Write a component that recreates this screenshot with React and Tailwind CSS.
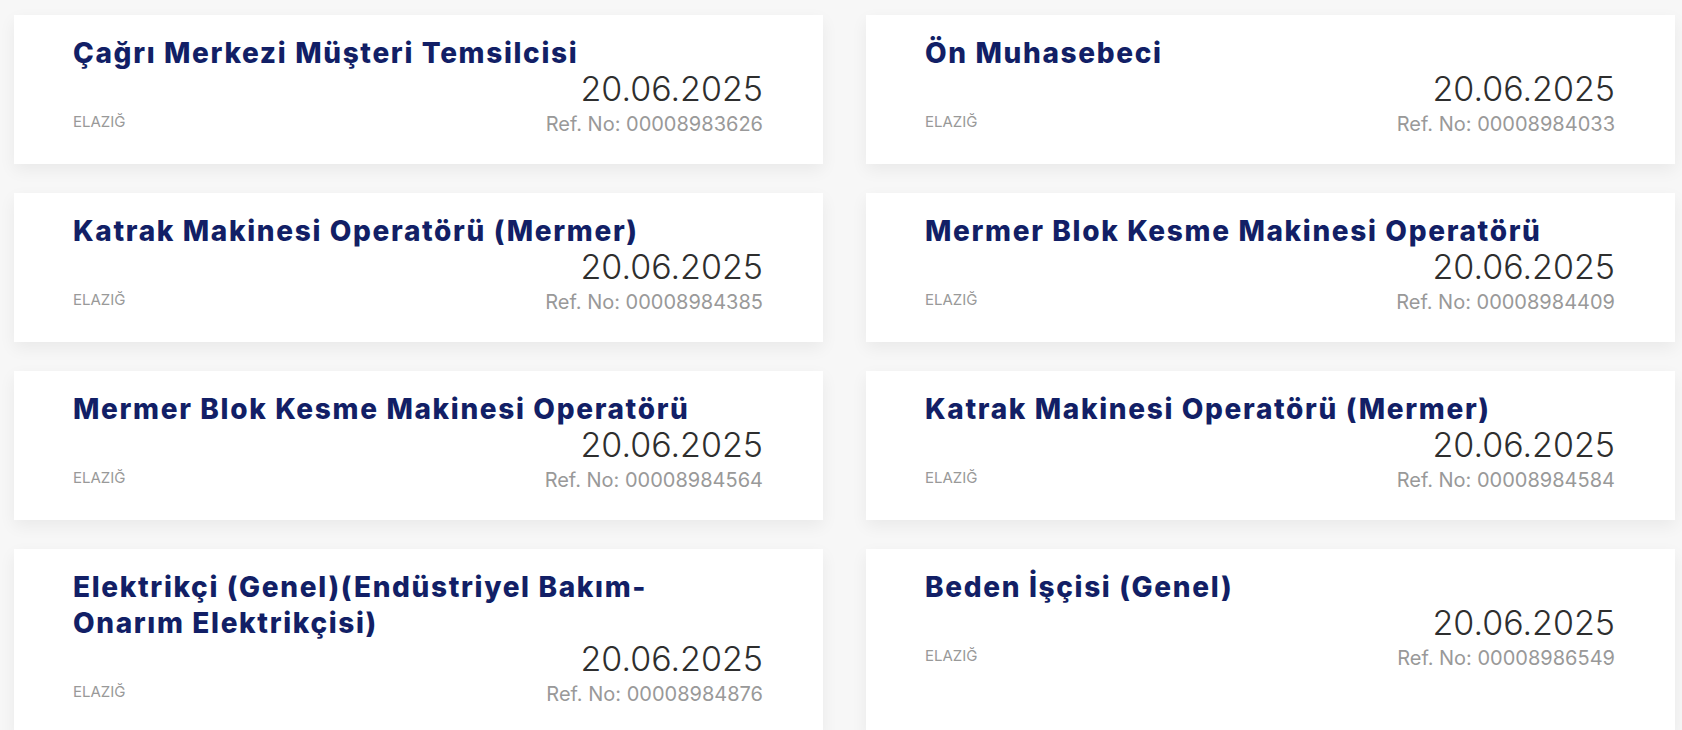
import React from "react";

const jobs = [
  { title: "Çağrı Merkezi Müşteri Temsilcisi", ref: "00008983626" },
  { title: "Ön Muhasebeci", ref: "00008984033" },
  { title: "Katrak Makinesi Operatörü (Mermer)", ref: "00008984385" },
  { title: "Mermer Blok Kesme Makinesi Operatörü", ref: "00008984409" },
  { title: "Mermer Blok Kesme Makinesi Operatörü", ref: "00008984564" },
  { title: "Katrak Makinesi Operatörü (Mermer)", ref: "00008984584" },
  { title: "Elektrikçi (Genel)(Endüstriyel Bakım-Onarım Elektrikçisi)", ref: "00008984876" },
  { title: "Beden İşçisi (Genel)", ref: "00008986549" },
];

function Card({ title, refNo }) {
  return (
    <div className="bg-white shadow-[0_6px_16px_rgba(0,0,0,0.06)] pl-[59px] pr-[60px] pt-[20px] pb-[28px]">
      <h3 className="text-[28px] leading-[36px] font-extrabold tracking-[1.65px] text-[#121f66] max-w-[620px]">
        {title}
      </h3>
      <div className="flex justify-between items-end">
        <span className="mb-[4px] text-[15px] leading-[20px] text-[#999999]">ELAZIĞ</span>
        <div className="flex flex-col items-end">
          <div className="text-[34px] leading-[36px] font-light text-[#2e2e2e]">20.06.2025</div>
          <div className="mt-[5px] text-[20px] leading-[24px] text-[#999999]">Ref. No: {refNo}</div>
        </div>
      </div>
    </div>
  );
}

export default function App() {
  return (
    <div
      className="min-h-[730px] w-full bg-[#f7f7f7] pl-[14px] pt-[15px] overflow-hidden"
      style={{ fontFamily: "Inter, 'Noto Sans', sans-serif" }}
    >
      <div className="grid grid-cols-[809px_809px] gap-x-[43px] gap-y-[29px]">
        {jobs.map((j, i) => (
          <Card key={i} title={j.title} refNo={j.ref} />
        ))}
      </div>
    </div>
  );
}
